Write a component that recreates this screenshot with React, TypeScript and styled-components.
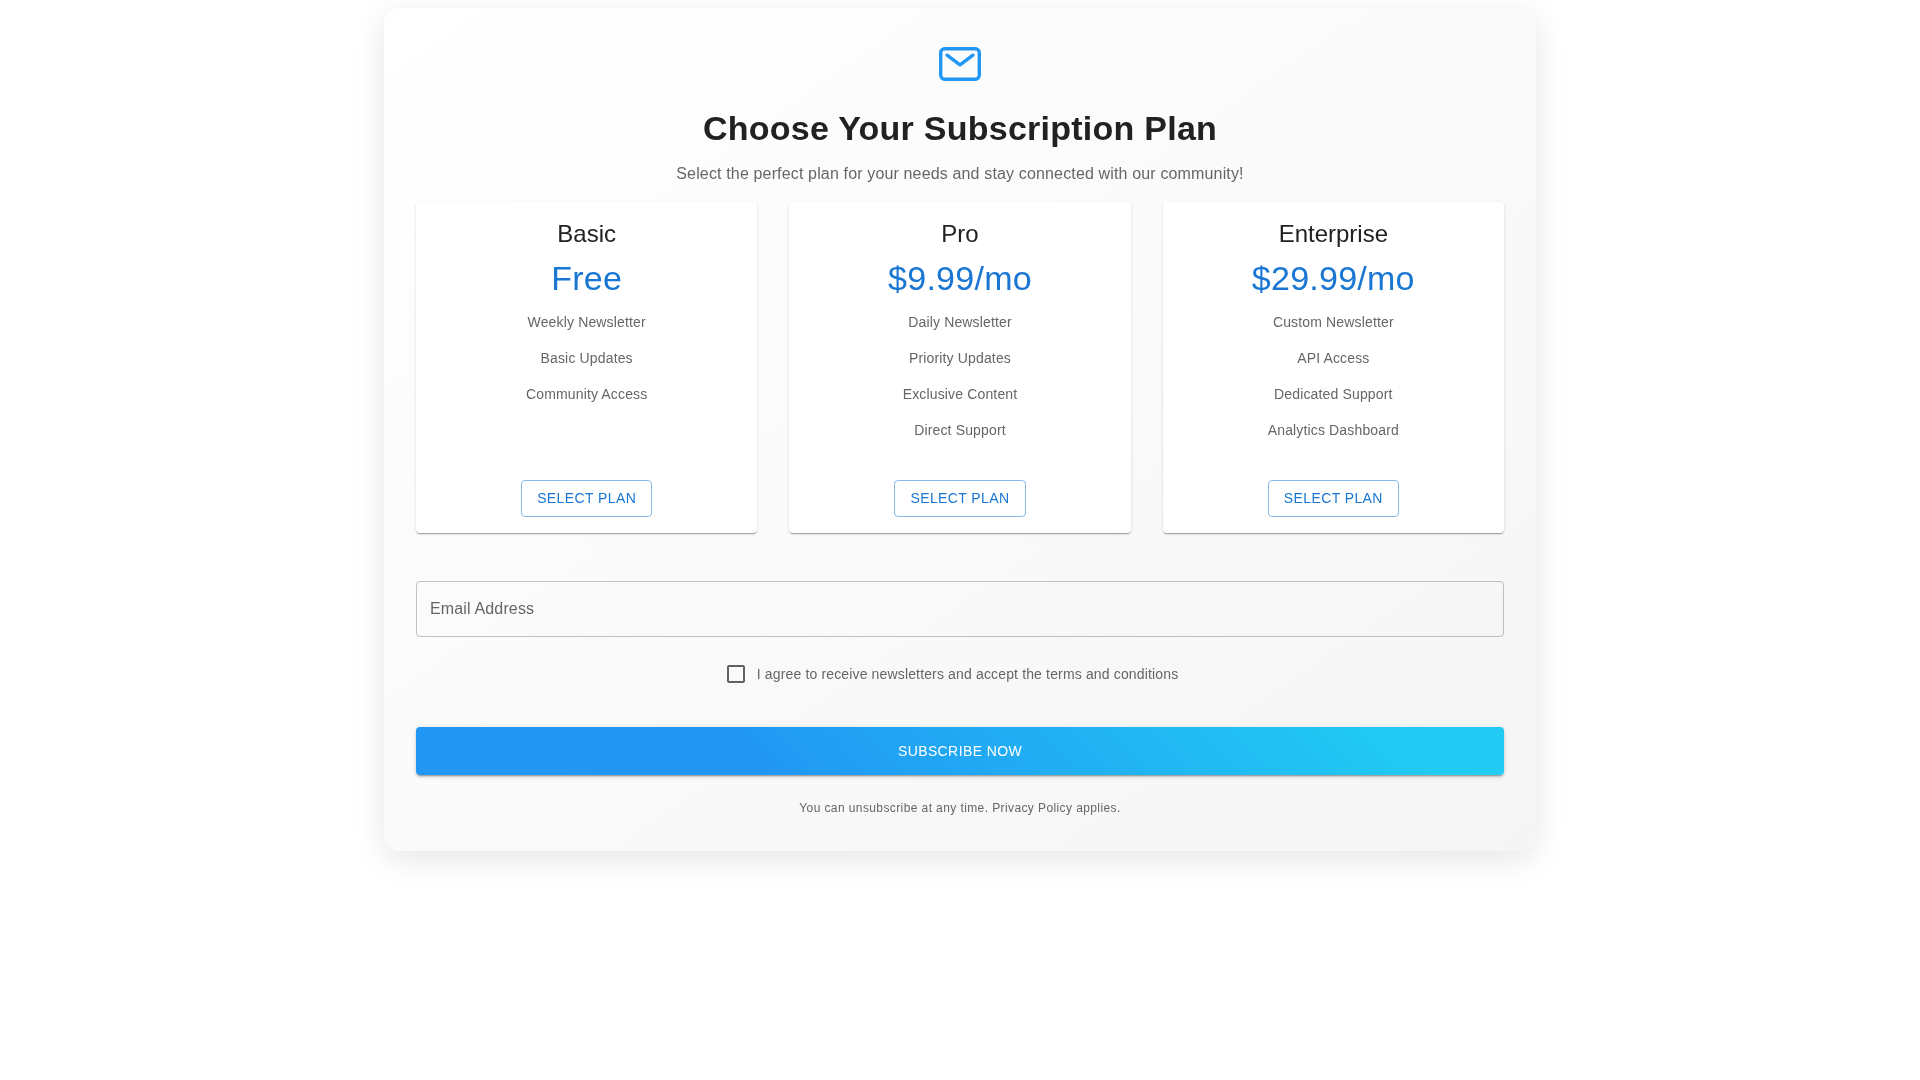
import styled, { createGlobalStyle } from 'styled-components'

type Plan = {
  name: string
  price: string
  features: string[]
}

const plans: Plan[] = [
  { name: 'Basic', price: 'Free', features: ['Weekly Newsletter', 'Basic Updates', 'Community Access'] },
  { name: 'Pro', price: '$9.99/mo', features: ['Daily Newsletter', 'Priority Updates', 'Exclusive Content', 'Direct Support'] },
  { name: 'Enterprise', price: '$29.99/mo', features: ['Custom Newsletter', 'API Access', 'Dedicated Support', 'Analytics Dashboard'] },
]

const GlobalStyle = createGlobalStyle`
  body {
    margin: 0;
    background: #fff;
    font-family: "Liberation Sans", Arial, sans-serif;
  }
`

const Container = styled.main`
  box-sizing: border-box;
  max-width: 1200px;
  min-height: 100vh;
  margin: 0 auto;
  padding: 8px 24px 32px;
`

const Panel = styled.section`
  padding: 32px 32px 33px;
  border-radius: 16px;
  background: linear-gradient(145deg, #ffffff, #f5f5f5);
  box-shadow: 0 8px 32px rgba(0, 0, 0, 0.1);
  transform: translateZ(0);
`

const Header = styled.header`
  display: flex;
  flex-direction: column;
  align-items: center;
  text-align: center;
`

const Title = styled.h1`
  margin: 20px 0 12px;
  font-size: 34px;
  font-weight: 700;
  line-height: 1.235;
  letter-spacing: 0.25px;
  color: #212121;
`

const Subtitle = styled.p`
  margin: 0;
  font-size: 16px;
  line-height: 1.5;
  letter-spacing: 0.15px;
  color: #666;
`

const PlanGrid = styled.div`
  display: grid;
  grid-template-columns: repeat(3, 1fr);
  gap: 32px;
  margin-top: 16px;
`

const Card = styled.article`
  display: flex;
  flex-direction: column;
  align-items: center;
  padding: 16px;
  border-radius: 4px;
  background: #fff;
  box-shadow: 0 2px 1px -1px rgba(0, 0, 0, 0.2), 0 1px 1px rgba(0, 0, 0, 0.14), 0 1px 3px rgba(0, 0, 0, 0.12);
`

const PlanName = styled.h2`
  margin: 0;
  font-size: 24px;
  font-weight: 400;
  line-height: 1.334;
  color: #212121;
`

const Price = styled.div`
  margin: 8px 0 4px;
  font-size: 34px;
  line-height: 1.235;
  letter-spacing: 0.25px;
  color: #1976d2;
`

const FeatureList = styled.ul`
  flex: 1;
  min-height: 176px;
  margin: 0;
  padding: 0;
  list-style: none;
`

const Feature = styled.li`
  padding: 8px 0;
  font-size: 14px;
  line-height: 20px;
  letter-spacing: 0.15px;
  text-align: center;
  color: #666;
`

const SelectButton = styled.button`
  height: 37px;
  padding: 0 15px;
  border: 1px solid rgba(25, 118, 210, 0.5);
  border-radius: 4px;
  background: transparent;
  font: inherit;
  font-size: 14px;
  letter-spacing: 0.4px;
  text-transform: uppercase;
  color: #1976d2;
  cursor: pointer;
`

const EmailInput = styled.input`
  display: block;
  box-sizing: border-box;
  width: 100%;
  height: 56px;
  margin-top: 48px;
  padding: 0 13px;
  border: 1px solid rgba(0, 0, 0, 0.23);
  border-radius: 4px;
  background: transparent;
  outline: none;
  font: inherit;
  font-size: 16px;
  letter-spacing: 0.15px;
  color: #212121;

  &::placeholder {
    color: #666;
    opacity: 1;
  }
`

const Agreement = styled.label`
  display: flex;
  align-items: center;
  justify-content: center;
  gap: 8px;
  margin-top: 16px;
  height: 42px;
  padding-right: 18px;
  font-size: 14px;
  letter-spacing: 0.15px;
  color: #666;
  cursor: pointer;
`

const BoxIcon = styled.svg`
  width: 24px;
  height: 24px;
  margin-right: 1px;
  fill: #616161;
`

const SubscribeButton = styled.button`
  display: block;
  width: 100%;
  height: 48px;
  margin-top: 32px;
  border: 0;
  border-radius: 4px;
  background: linear-gradient(45deg, #2196f3 30%, #21cbf3 90%);
  box-shadow: 0 3px 1px -2px rgba(0, 0, 0, 0.2), 0 2px 2px rgba(0, 0, 0, 0.14), 0 1px 5px rgba(0, 0, 0, 0.12);
  font: inherit;
  font-size: 14px;
  letter-spacing: 0.4px;
  text-transform: uppercase;
  color: #fff;
  cursor: pointer;
`

const Footnote = styled.p`
  margin: 23px 0 0;
  font-size: 12px;
  line-height: 20px;
  letter-spacing: 0.4px;
  text-align: center;
  color: #666;
`

export default function App() {
  return (
    <>
      <GlobalStyle />
      <Container>
        <Panel>
          <Header>
            <svg width="48" height="48" viewBox="0 0 48 48" fill="none" stroke="#2196f3" strokeWidth="3.4" strokeLinecap="round" strokeLinejoin="round">
              <rect x="4.7" y="8.7" width="38.6" height="30.6" rx="4" />
              <path d="M11 15.2 24 24.8l13-9.6" />
            </svg>
            <Title>Choose Your Subscription Plan</Title>
            <Subtitle>Select the perfect plan for your needs and stay connected with our community!</Subtitle>
          </Header>
          <PlanGrid>
            {plans.map(plan => (
              <Card key={plan.name}>
                <PlanName>{plan.name}</PlanName>
                <Price>{plan.price}</Price>
                <FeatureList>
                  {plan.features.map(feature => (
                    <Feature key={feature}>{feature}</Feature>
                  ))}
                </FeatureList>
                <SelectButton>Select Plan</SelectButton>
              </Card>
            ))}
          </PlanGrid>
          <EmailInput type="email" placeholder="Email Address" />
          <Agreement>
            <BoxIcon viewBox="0 0 24 24">
              <path d="M19 5v14H5V5h14m0-2H5c-1.1 0-2 .9-2 2v14c0 1.1.9 2 2 2h14c1.1 0 2-.9 2-2V5c0-1.1-.9-2-2-2z" />
            </BoxIcon>
            I agree to receive newsletters and accept the terms and conditions
          </Agreement>
          <SubscribeButton>Subscribe Now</SubscribeButton>
          <Footnote>You can unsubscribe at any time. Privacy Policy applies.</Footnote>
        </Panel>
      </Container>
    </>
  )
}
